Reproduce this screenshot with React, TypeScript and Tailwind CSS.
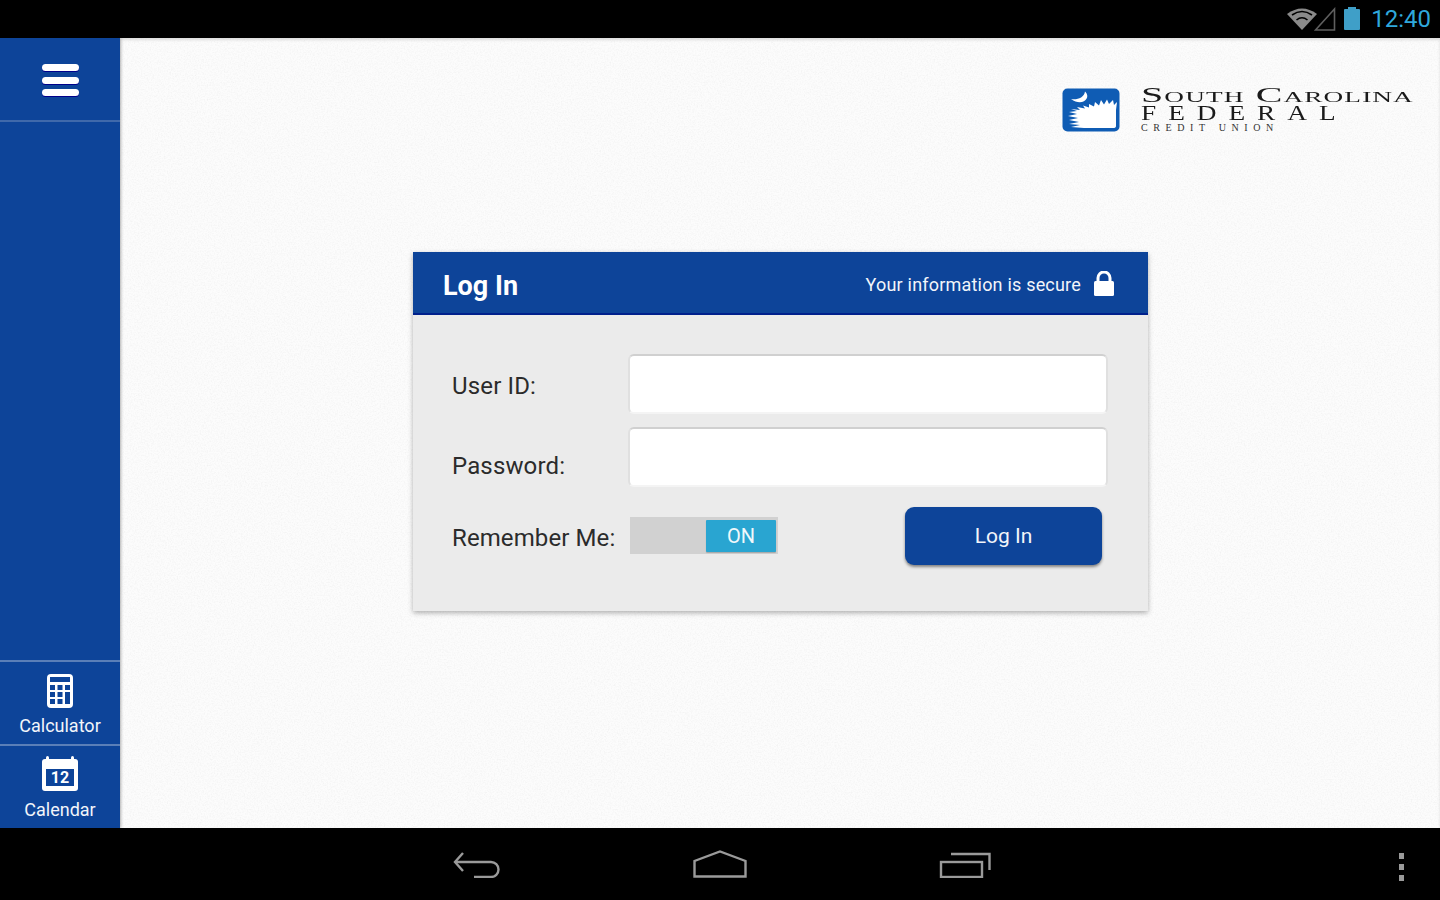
import { useState } from "react";

function Hamburger() {
  return (
    <div className="flex flex-col gap-[5.5px] pt-[2px]">
      <span className="block h-[7px] w-[37px] rounded-full bg-white shadow-[0_1px_0_#00008b]" />
      <span className="block h-[7px] w-[37px] rounded-full bg-white shadow-[0_1px_0_#00008b]" />
      <span className="block h-[7px] w-[37px] rounded-full bg-white shadow-[0_1px_0_#00008b]" />
    </div>
  );
}

function CalculatorIcon() {
  return (
    <svg width="26" height="34" viewBox="0 0 26 34">
      <rect x="0" y="0" width="26" height="34" rx="4" fill="#fff" />
      <rect x="3" y="3" width="20" height="5" fill="#0d4499" />
      <g fill="#0d4499">
        <rect x="3" y="11" width="5" height="5" />
        <rect x="10.5" y="11" width="5" height="5" />
        <rect x="18" y="11" width="5" height="5" />
        <rect x="3" y="18" width="5" height="5" />
        <rect x="10.5" y="18" width="5" height="5" />
        <rect x="18" y="18" width="5" height="12" />
        <rect x="3" y="25" width="5" height="5" />
        <rect x="10.5" y="25" width="5" height="5" />
      </g>
    </svg>
  );
}

function CalendarIcon() {
  return (
    <div className="relative flex h-[32px] w-[36px] items-end justify-center rounded-[3px] bg-white pb-[5px]">
      <span className="absolute left-[4px] top-[-3px] h-[4px] w-[3px] rounded-t-sm bg-white" />
      <span className="absolute right-[4px] top-[-3px] h-[4px] w-[3px] rounded-t-sm bg-white" />
      <div className="flex h-[17px] w-[28px] items-center justify-center bg-[#0d4499] text-[16px] font-bold leading-none text-white">
        12
      </div>
    </div>
  );
}

function SideButton({ icon, label }: { icon: React.ReactNode; label: string }) {
  return (
    <div className="flex h-[84px] flex-col items-center border-t-2 border-[#5a7fb8] pt-[12px]">
      <div className="flex h-[34px] items-center">{icon}</div>
      <span className="mt-[6px] text-[18px] leading-[24px] text-[#f2f5fa]">{label}</span>
    </div>
  );
}

function LogoMark() {
  return (
    <svg width="58" height="44" viewBox="0 0 58 44">
      <rect x="0.5" y="0.5" width="57" height="43" rx="5" fill="#0f5cb4" />
      <path d="M9 11 C15 12 22 10 23 3.5 C30 10 20 19 9 11 Z" fill="#fff" />
      <path
        d="M9 21 L18 22 L15 19 L23 20.5 L21 17.5 L27 19.5 L27 16 L32 18.5 L33 14 L37 17.5 L39 12 L42 16.5 L45 11.5 L47 16 L51 12 L52 17 L55 14 L54 22 L54 38 Q54 40 51 40 L22 40 L9 39 L18 37 L7 36 L17 34 L7 32 L16 30 L6 28 L15 26 L7 24 L15 23 Z"
        fill="#fff"
      />
    </svg>
  );
}

function Logo() {
  return (
    <div className="flex items-start gap-[21px]">
      <LogoMark />
      <div className="mt-[-2px] w-[270px] font-['Liberation_Serif',serif] text-[#1a1a1a]">
        <div className="origin-left scale-x-[1.82] whitespace-nowrap text-[22px] leading-[18px] tracking-[0.6px] [font-variant:small-caps]">
          South Carolina
        </div>
        <div className="origin-left scale-x-[1.3] whitespace-nowrap text-[21px] leading-[18px] tracking-[9.2px]">FEDERAL</div>
        <div className="whitespace-nowrap text-[10px] leading-[11px] tracking-[5.6px] text-[#333]">
          CREDIT UNION
        </div>
      </div>
    </div>
  );
}

function Field({ label, labelClass, className }: { label: string; labelClass: string; className?: string }) {
  return (
    <div className={`flex items-center ${className ?? ""}`}>
      <label className={`w-[176px] text-[24px] tracking-[0.15px] text-[#2b2b2b] ${labelClass}`}>{label}</label>
      <input className="h-[60px] w-[480px] rounded-[6px] border-2 border-[#e0e0e0] border-t-[#d0d0d0] border-b-[#f4f4f4] bg-white outline-none" />
    </div>
  );
}

export default function App() {
  const [remember, setRemember] = useState(true);

  return (
    <div className="flex h-[900px] w-[1440px] flex-col overflow-hidden bg-black font-['Roboto',sans-serif]">
      {/* status bar */}
      <div className="flex h-[38px] items-center justify-end bg-black pr-[9px]">
        <svg width="30" height="24" viewBox="0 0 30 24" className="mr-[-3px]">
          <path d="M15 23 L0 7 Q15 -4 30 7 Z" fill="#8a8a8a" />
          <path d="M5 8 Q15 1 25 8" fill="none" stroke="#000" strokeWidth="1.6" />
          <path d="M9.5 13 Q15 8.5 20.5 13" fill="none" stroke="#000" strokeWidth="1.6" />
        </svg>
        <svg width="22" height="24" viewBox="0 0 22 24">
          <path d="M20.5 2 V23 H1.5 Z" fill="none" stroke="#5f5f5f" strokeWidth="1.6" />
        </svg>
        <div className="relative ml-[8px] h-[21px] w-[16px] rounded-[1px] bg-[#3f9fc8]">
          <span className="absolute left-[4px] top-[-2px] h-[2px] w-[8px] bg-[#3f9fc8]" />
        </div>
        <span className="ml-[11px] text-[24px] leading-none text-[#2fa8dc]">12:40</span>
      </div>

      <div className="flex h-[790px]">
        {/* side rail */}
        <aside className="relative z-10 flex w-[120px] flex-col justify-between bg-[#0d4499] shadow-[1px_0_3px_rgba(0,0,0,0.25)]">
          <div className="flex h-[84px] items-center justify-center border-b-2 border-[#3f69ab]">
            <Hamburger />
          </div>
          <div>
            <SideButton icon={<CalculatorIcon />} label="Calculator" />
            <SideButton icon={<CalendarIcon />} label="Calendar" />
          </div>
        </aside>

        {/* content */}
        <main className="relative flex-1 overflow-hidden bg-[#fcfcfc] shadow-[inset_0_2px_3px_rgba(0,0,0,0.12)]">
          <svg className="pointer-events-none absolute inset-0 h-full w-full">
            <filter id="paper">
              <feTurbulence type="fractalNoise" baseFrequency="0.7" numOctaves="2" seed="4" />
              <feColorMatrix values="0 0 0 0 0.5  0 0 0 0 0.5  0 0 0 0 0.5  0.2 0.2 0 0 -0.17" />
            </filter>
            <rect width="100%" height="100%" filter="url(#paper)" />
          </svg>

          <div className="relative flex justify-end pr-[29px] pt-[50px]">
            <Logo />
          </div>

          <section className="relative ml-[293px] mt-[119px] w-[735px] bg-[#ebebeb] shadow-[0_2px_5px_rgba(0,0,0,0.3)]">
            <header className="flex h-[63px] items-center justify-between border-b-2 border-[#00208c] bg-[#0d4499] pl-[30px] pr-[34px] pt-[4px] text-white">
              <h1 className="pt-[4px] text-[27px] font-bold leading-none">Log In</h1>
              <div className="flex items-center gap-[13px]">
                <span className="text-[18px] tracking-[0.2px] text-[#f2f5fa]">Your information is secure</span>
                <svg width="20" height="25" viewBox="0 0 20 25" className="mt-[-2px]">
                  <path d="M4 11 V7 a6 6 0 0 1 12 0 V11" fill="none" stroke="#fff" strokeWidth="3" />
                  <rect x="0" y="10" width="20" height="15" rx="1.5" fill="#fff" />
                </svg>
              </div>
            </header>

            <div className="pb-[46px] pl-[39px] pr-[39px] pt-[39px]">
              <Field label="User ID:" labelClass="pt-[4px]" />
              <Field label="Password:" labelClass="pt-[18px]" className="mt-[13px]" />
              <div className="mt-[20px] flex h-[58px] items-center">
                <label className="w-[178px] whitespace-nowrap pt-[4px] text-[24px] tracking-[0.1px] text-[#2b2b2b]">Remember Me:</label>
                <button
                  type="button"
                  onClick={() => setRemember(!remember)}
                  className="mb-[2px] flex h-[37px] w-[148px] justify-end bg-[#d1d1d1] pb-[2px] pr-[2px] pt-[3px]"
                >
                  <span className="flex h-[32px] w-[70px] items-center justify-center rounded-[1px] bg-[#29a5d1] text-[20px] text-[#f0f8fb] shadow-[0_1px_1px_rgba(0,0,0,0.2)]">
                    {remember ? "ON" : "OFF"}
                  </span>
                </button>
                <button
                  type="button"
                  className="ml-[127px] h-[58px] w-[197px] rounded-[9px] bg-[#0d4499] pt-[1px] text-[21px] text-[#f2f5fa] shadow-[0_2px_3px_rgba(0,0,0,0.45)]"
                >
                  Log In
                </button>
              </div>
            </div>
          </section>
        </main>
      </div>

      {/* nav bar */}
      <div className="relative flex h-[72px] items-center bg-black pl-[452px]">
        <svg width="50" height="28" viewBox="0 0 50 28" fill="none" stroke="#9a9a9a" strokeWidth="2.4">
          <path d="M11 3 L3 12 L11 21" />
          <path d="M4 12 H39 a7.5 7.5 0 0 1 0 15 H22" />
        </svg>
        <svg width="54" height="28" viewBox="0 0 54 28" fill="none" stroke="#9a9a9a" strokeWidth="2.4" className="ml-[191px]">
          <path d="M1.5 26.5 V11 L27 1.5 L52.5 11 V26.5 Z" />
        </svg>
        <svg width="52" height="28" viewBox="0 0 52 28" fill="none" stroke="#9a9a9a" strokeWidth="2.4" className="ml-[192px]">
          <rect x="2" y="12" width="41" height="15" />
          <path d="M12 4 H50.5 V20" />
        </svg>
        <div className="absolute right-[36px] top-[25px] flex flex-col gap-[5px]">
          <span className="block h-[6px] w-[5px] bg-[#9a9a9a]" />
          <span className="block h-[6px] w-[5px] bg-[#9a9a9a]" />
          <span className="block h-[6px] w-[5px] bg-[#9a9a9a]" />
        </div>
      </div>
    </div>
  );
}
